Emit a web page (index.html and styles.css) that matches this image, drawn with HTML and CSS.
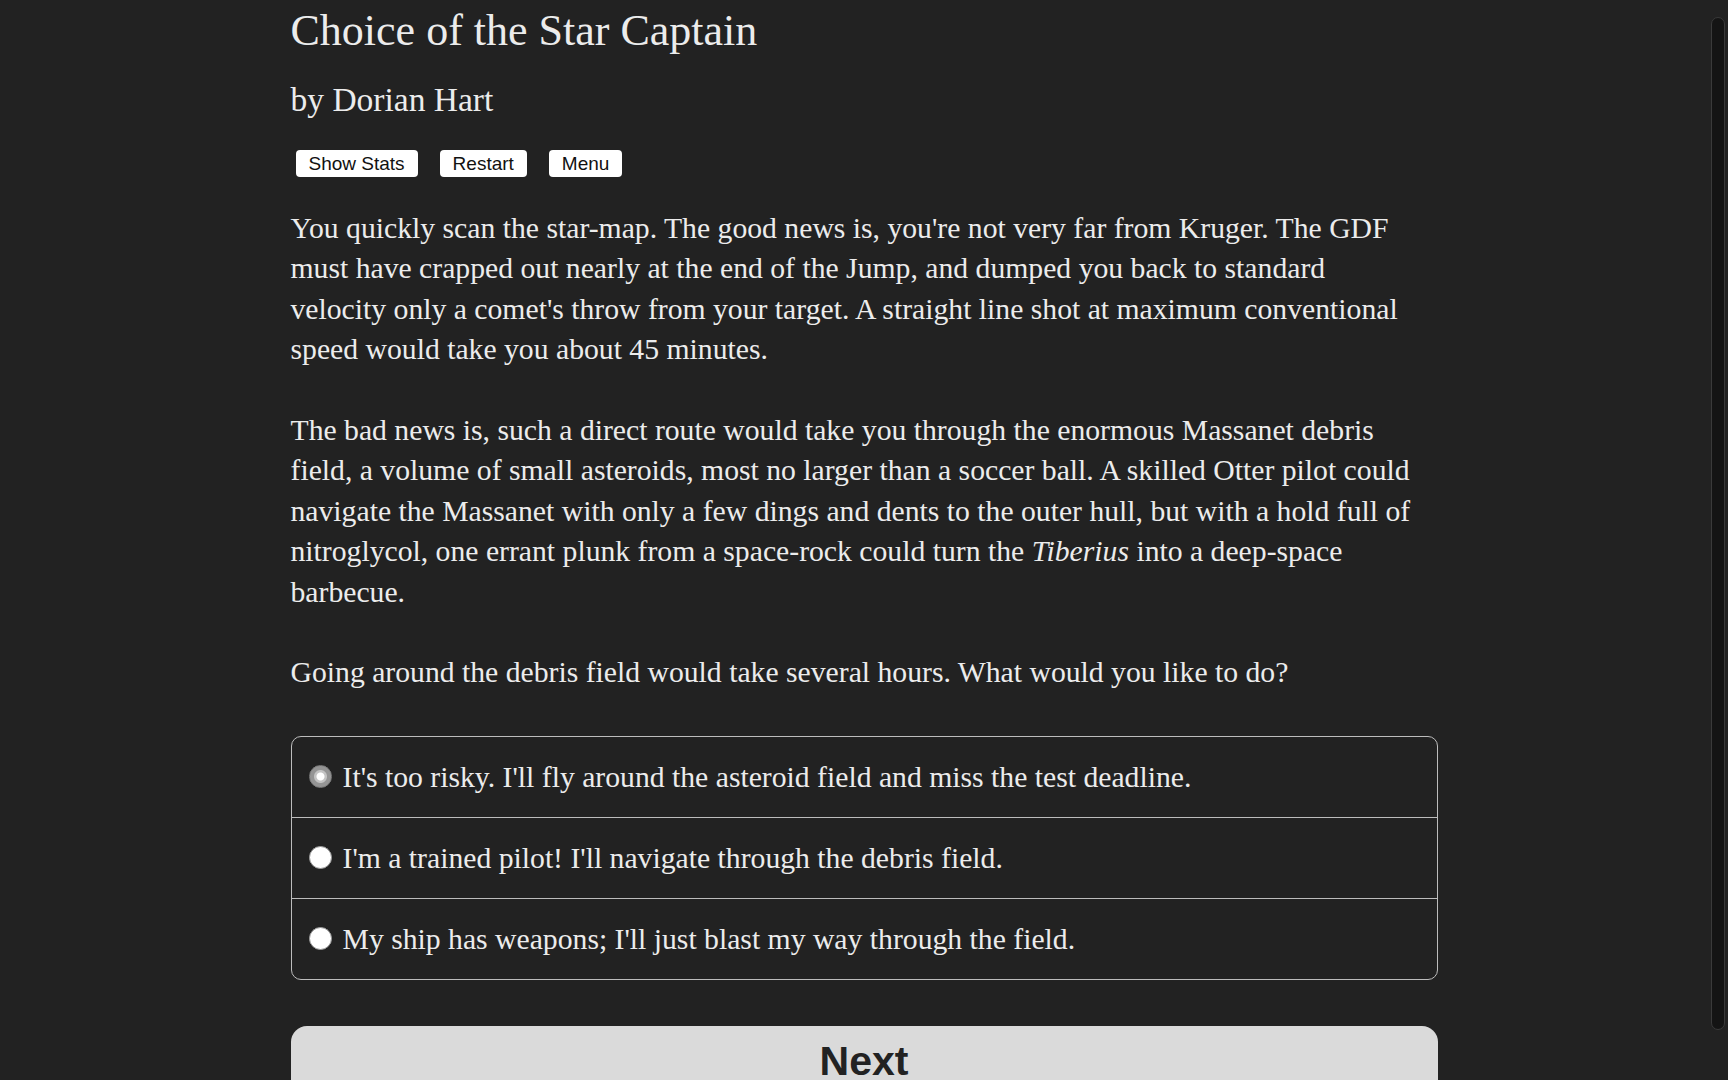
FILE: index.html
```html
<!DOCTYPE html>
<html lang="en">
<head>
<meta charset="utf-8">
<title>Choice of the Star Captain</title>
<link rel="stylesheet" href="styles.css">
</head>
<body>
<div class="container">
  <header class="header">
    <h1 class="title">Choice of the Star Captain</h1>
    <h2 class="author">by Dorian Hart</h2>
    <div class="buttons">
      <button class="small-btn">Show Stats</button>
      <button class="small-btn">Restart</button>
      <button class="small-btn">Menu</button>
    </div>
  </header>
  <main class="story">
    <p>You quickly scan the star-map. The good news is, you're not very far from Kruger. The GDF must have crapped out nearly at the end of the Jump, and dumped you back to standard velocity only a comet's throw from your target. A straight line shot at maximum conventional speed would take you about 45 minutes.</p>
    <p>The bad news is, such a direct route would take you through the enormous Massanet debris field, a volume of small asteroids, most no larger than a soccer ball. A skilled Otter pilot could navigate the Massanet with only a few dings and dents to the outer hull, but with a hold full of nitroglycol, one errant plunk from a space-rock could turn the <i>Tiberius</i> into a deep-space barbecue.</p>
    <p>Going around the debris field would take several hours. What would you like to do?</p>
    <div class="choices">
      <label class="choice"><span class="radio checked"></span><span class="choice-text">It's too risky. I'll fly around the asteroid field and miss the test deadline.</span></label>
      <label class="choice"><span class="radio"></span><span class="choice-text">I'm a trained pilot! I'll navigate through the debris field.</span></label>
      <label class="choice"><span class="radio"></span><span class="choice-text">My ship has weapons; I'll just blast my way through the field.</span></label>
    </div>
    <button class="next-btn">Next</button>
  </main>
</div>
<div class="scrollbar"></div>
</body>
</html>
```
FILE: styles.css
```css
html, body {
  margin: 0;
  padding: 0;
  background: #222222;
  height: 100%;
  overflow: hidden;
}
body {
  color: #ececec;
  font-family: "Liberation Serif", "Times New Roman", serif;
}
.container {
  width: 1147px;
  margin: 0 auto;
}
.title {
  font-size: 44px;
  font-weight: normal;
  margin: 6px 0 0;
  line-height: 50px;
}
.author {
  font-size: 33.5px;
  font-weight: normal;
  margin: 26px 0 0;
  line-height: 36px;
}
.buttons {
  display: flex;
  gap: 22px;
  margin: 32px 0 0 5px;
}
.small-btn {
  font-family: "Liberation Sans", Arial, sans-serif;
  font-size: 19px;
  color: #111;
  background: #ffffff;
  border: none;
  border-radius: 4px;
  height: 27px;
  padding: 0 13px;
  line-height: 27px;
}
.story {
  margin-top: 31px;
  font-size: 29.7px;
  line-height: 40.4px;
}
.story p {
  margin: 0 0 40.4px;
  padding-right: 13px;
}
.choices {
  border: 1px solid #bdbdbd;
  border-radius: 10px;
  margin-top: 43px;
}
.choice {
  display: flex;
  align-items: center;
  height: 80px;
  padding-left: 17px;
}
.choice + .choice {
  border-top: 1px solid #bdbdbd;
}
.radio {
  width: 23px;
  height: 23px;
  border-radius: 50%;
  background: #ffffff;
  box-sizing: border-box;
  border: 1px solid #999;
  margin-right: 11px;
  flex: none;
}
.radio.checked {
  background: radial-gradient(circle, #ffffff 0 3.5px, #c4c4c4 4.5px 6px, #959595 7px);
  border-color: #7d7d7d;
}
.next-btn {
  width: 100%;
  margin-top: 46px;
  height: 100px;
  background: #dadada;
  border: none;
  border-radius: 16px;
  font-family: "Liberation Sans", Arial, sans-serif;
  font-weight: bold;
  font-size: 41px;
  line-height: 48px;
  color: #222;
  padding: 11px 0 0;
  box-sizing: border-box;
  display: flex;
  justify-content: center;
  align-items: flex-start;
}
.scrollbar {
  position: fixed;
  left: 1711px;
  top: 17px;
  width: 14px;
  height: 1013px;
  background: #141414;
  border: 1px solid #3a3a3a;
  border-radius: 8px;
  box-sizing: border-box;
}
```
